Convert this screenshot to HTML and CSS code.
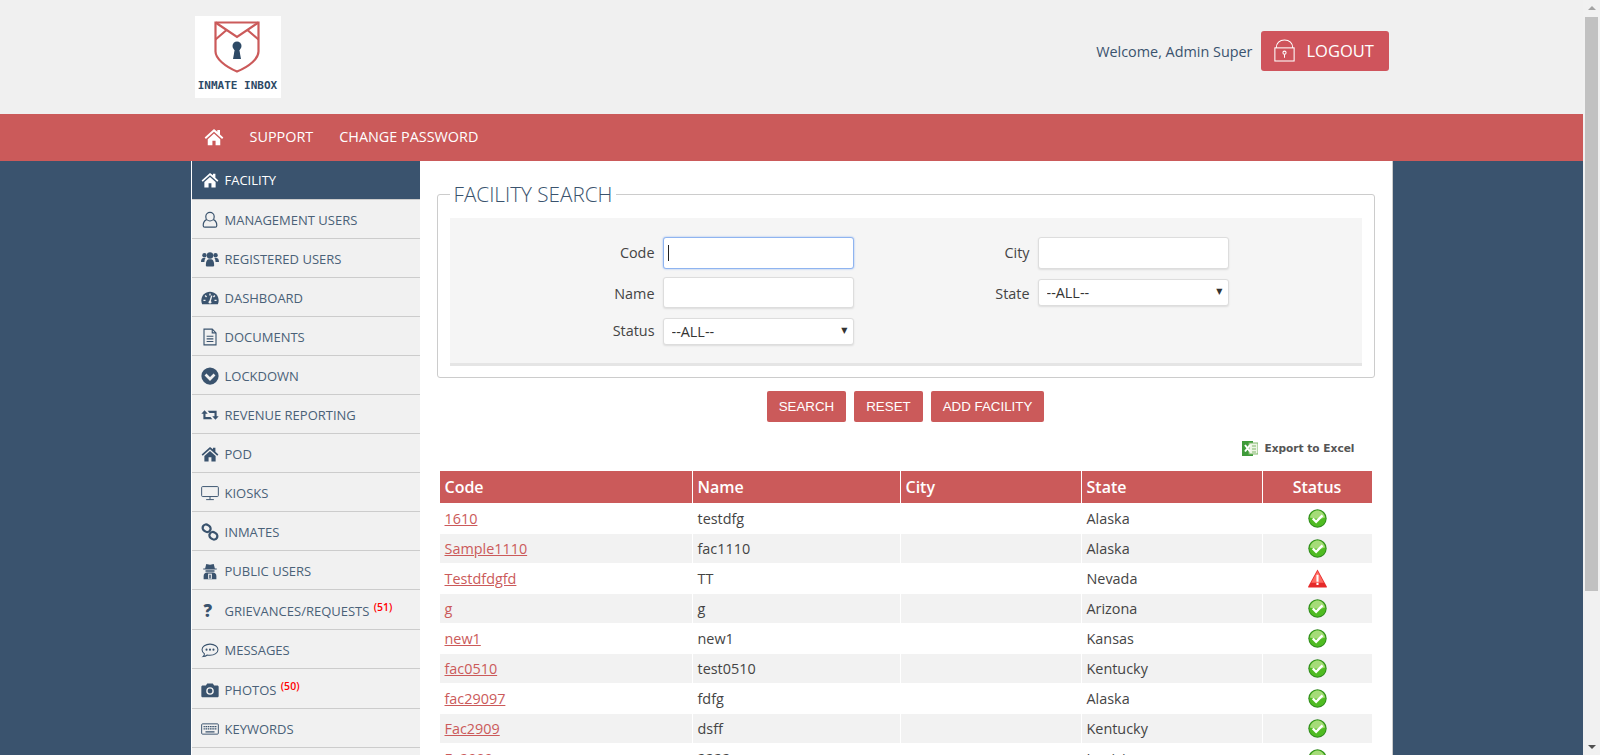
FILE: index.html
```html
<!DOCTYPE html>
<html>
<head>
    <title>Inmate Inbox - Facility</title>
    <link rel="stylesheet" href="styles.css">
</head>
<body>
    <svg class="icon-defs" width="0" height="0">
        <symbol id="i-home" viewBox="0 0 24 24"><path d="M12 2.5 0.8 12.6l1.5 1.7L12 5.6l9.7 8.7 1.5-1.7-4-3.6V3.5h-3.2v2.3zM4.5 14.6V22h5.6v-5.6h3.8V22h5.6v-7.4L12 7.9z"/></symbol>
        <symbol id="i-user" viewBox="0 0 24 24"><g fill="none" stroke="currentColor" stroke-width="1.6"><ellipse cx="12" cy="7.5" rx="5.6" ry="5.8"/><path d="M7.4 11.5C4.5 13 3 15.500 3 18.500v1c0 1.200.8 2 2 2h14c1.200 0 2-.8 2-2v-1c0-3-1.500-5.500-4.400-7"/></g></symbol>
        <symbol id="i-users" viewBox="0 0 26 24"><circle cx="5" cy="6.500" r="3.200"/><circle cx="21" cy="6.500" r="3.200"/><circle cx="13" cy="7" r="4.600"/><path d="M0 16c0-3.500 1.500-5.500 3.500-5.500h3.200C5.500 12 5 14 5 16.500H1c-.6 0-1-.2-1-.5zM26 16c0-3.500-1.500-5.500-3.500-5.500h-3.200c1.200 1.500 1.700 3.500 1.700 6h4c.6 0 1-.2 1-.5zM7 21c0-5 1.500-8.500 4-8.500h4c2.500 0 4 3.500 4 8.500 0 1.500-1 2-2 2H9c-1 0-2-.5-2-2z"/></symbol>
        <symbol id="i-gauge" viewBox="0 0 26 24"><path d="M13 3C6 3 .5 8.500.5 15.500c0 2 .4 3.800 1.200 5.500h22.600c.8-1.700 1.200-3.500 1.200-5.500C25.500 8.500 20 3 13 3z"/><g fill="none" stroke="#f1f1f1" stroke-width="2"><path d="M13 5.500v3M6 8.500l2 2M20 8.500l-2 2M3.500 15.500h3M22.500 15.500h-3"/><path d="M15.500 8.500 13 17"/></g><circle cx="13" cy="18" r="2" fill="#f1f1f1"/></symbol>
        <symbol id="i-doc" viewBox="0 0 20 24"><g fill="none" stroke="currentColor" stroke-width="1.500"><path d="M2 1.500h11l5 5v16H2z"/><path d="M13 1.500v5h5M5.500 11h9M5.500 14.500h9M5.500 18h9"/></g></symbol>
        <symbol id="i-down" viewBox="0 0 24 24"><circle cx="12" cy="12" r="11.500"/><path d="M6 10l6 6 6-6" fill="none" stroke="#f1f1f1" stroke-width="3.600"/></symbol>
        <symbol id="i-retweet" viewBox="0 0 28 24"><path d="M5.500 4.500 0.500 10h3.200v8.500h14l-3-3.300H7V10h3.500z"/><path d="M22.500 19.500l5-5.500h-3.200V5.500h-14l3 3.300H21V14h-3.500z"/></symbol>
        <symbol id="i-tv" viewBox="0 0 28 24"><g fill="none" stroke="currentColor" stroke-width="1.500"><rect x="1" y="2" width="26" height="15.500" rx="1.500"/><path d="M14 17.500v4.500M8 22.300h12"/></g></symbol>
        <symbol id="i-link" viewBox="0 0 24 24"><g fill="none" stroke="currentColor" stroke-width="3"><rect x="2" y="2.500" width="11" height="9" rx="4.500" transform="rotate(35 7.500 7)"/><rect x="11" y="12.500" width="11" height="9" rx="4.500" transform="rotate(35 16.500 17)"/></g></symbol>
        <symbol id="i-secret" viewBox="0 0 20 24"><path d="M5 2.500 10 3.500l5-1 1.500 6h2.500v1.500H1V8.500h2.500z"/><path d="M4 11h12v2h-12z"/><path d="M1.500 23v-4.500C1.500 16 3.500 14 6 14h8c2.500 0 4.500 2 4.500 4.500V23z"/><path d="M7.500 15.500h5v7h-5z" fill="#f1f1f1"/><path d="M9 17h2v5H9z"/></symbol>
        <symbol id="i-comment" viewBox="0 0 26 24"><g fill="none" stroke="currentColor" stroke-width="1.500"><path d="M13 3.500C6.500 3.500 1.500 7 1.500 11.500c0 2.500 1.500 4.500 3.500 6 0 1.500-.8 3-2 4 2.500-.2 4.500-1 6-2.300 1.300.3 2.600.3 4 .3 6.500 0 11.500-3.500 11.500-8S19.500 3.500 13 3.500z"/></g><circle cx="8" cy="11.500" r="1.500"/><circle cx="13" cy="11.500" r="1.500"/><circle cx="18" cy="11.500" r="1.500"/></symbol>
        <symbol id="i-camera" viewBox="0 0 26 24"><path d="M9 2.500h8l2 3h4.500c1.200 0 2 .8 2 2v13c0 1.200-.8 2-2 2h-21c-1.200 0-2-.8-2-2v-13c0-1.200.8-2 2-2H7z"/><circle cx="13" cy="13.500" r="5.500" fill="#f1f1f1"/><circle cx="13" cy="13.500" r="3.500"/></symbol>
        <symbol id="i-keyboard" viewBox="0 0 28 24"><rect x="1" y="4" width="26" height="16" rx="1.500" fill="none" stroke="currentColor" stroke-width="1.500"/><path d="M4 7.500h20v1.800H4zM4 11h20v1.800H4zM7 15.500h14v1.800H7z"/><path d="M6 7h1v7H6zM9.500 7h1v7h-1zM13 7h1v7h-1zM16.500 7h1v7h-1zM20 7h1v7h-1z" fill="#f1f1f1"/></symbol>
        <symbol id="i-ok" viewBox="0 0 18 18"><circle cx="9" cy="9" r="8.700" fill="#2f8a1c"/><circle cx="9" cy="9" r="7.800" fill="#4fbb22"/><path d="M1.800 8C2.800 4 6 1.500 9 1.500S15.200 4 16.200 8c-4 1.500-9.400 1.500-14.400 0z" fill="#a5dc78"/><path d="M4.500 9l3.200 3.200 6-6.200" fill="none" stroke="#fff" stroke-width="2.200"/></symbol>
        <symbol id="i-warn" viewBox="0 0 18 18"><path d="M9 .5 17.800 16.500v1H.2v-1z" fill="#e52a2a"/><path d="M9 2 3 13h12z" fill="#ff6b62"/><path d="M8 5.500h2v6.500H8zM8 13h2v2.200H8z" fill="#fff"/></symbol>
    </svg>

    <div class="top">
        <div class="wrap top-inner">
            <div class="logo">
                <svg class="logo-mark" viewBox="0 0 46 52">
                    <g fill="none" stroke="#cb5a5a" stroke-width="2.200">
                        <path d="M1.500 1.500h43v29c0 7-9 15-21.500 20C11 45.500 1.500 37.500 1.500 30.500z"/>
                        <path d="M1.500 1.500 23 16 44.500 1.500M1.500 18.500 12 9.500M44.500 18.500 34 9.500"/>
                    </g>
                    <circle cx="23" cy="25" r="4.500" fill="#2e4a66"/>
                    <path d="M21 27h4l2 11h-8z" fill="#2e4a66"/>
                </svg>
                <div class="logo-text">INMATE INBOX</div>
            </div>
            <div class="welcome">
                <span>Welcome, Admin Super</span>
                <a class="logout" href="#">
                    <svg class="logout-icon" viewBox="0 0 24 26" fill="none" stroke="#fff" stroke-width="1.200">
                        <rect x="1" y="10" width="22" height="15"/>
                        <path d="M2.500 10C2.500 4.500 6.500 1 12 1s9.500 3.500 9.500 9"/>
                        <circle cx="12" cy="15.500" r="1.800"/>
                        <path d="M12 17.300v4"/>
                    </svg>
                    LOGOUT
                </a>
            </div>
        </div>
    </div>

    <div class="nav">
        <div class="wrap nav-inner">
            <a href="#" class="nav-home"><svg class="nav-home-icon"><use href="#i-home"/></svg></a>
            <a href="#">SUPPORT</a>
            <a href="#">CHANGE PASSWORD</a>
        </div>
    </div>

    <div class="wrap page">
        <ul class="side">
            <li class="active"><svg><use href="#i-home"/></svg>FACILITY</li>
            <li><svg><use href="#i-user"/></svg>MANAGEMENT USERS</li>
            <li><svg><use href="#i-users"/></svg>REGISTERED USERS</li>
            <li><svg><use href="#i-gauge"/></svg>DASHBOARD</li>
            <li><svg><use href="#i-doc"/></svg>DOCUMENTS</li>
            <li><svg><use href="#i-down"/></svg>LOCKDOWN</li>
            <li><svg><use href="#i-retweet"/></svg>REVENUE REPORTING</li>
            <li><svg><use href="#i-home"/></svg>POD</li>
            <li><svg><use href="#i-tv"/></svg>KIOSKS</li>
            <li><svg><use href="#i-link"/></svg>INMATES</li>
            <li><svg><use href="#i-secret"/></svg>PUBLIC USERS</li>
            <li class="tall"><b class="side-q">?</b>GRIEVANCES/REQUESTS <sup>(51)</sup></li>
            <li><svg><use href="#i-comment"/></svg>MESSAGES</li>
            <li class="tall"><svg><use href="#i-camera"/></svg>PHOTOS <sup>(50)</sup></li>
            <li><svg><use href="#i-keyboard"/></svg>KEYWORDS</li>
        </ul>

        <div class="main">
            <fieldset class="search">
                <legend>FACILITY SEARCH</legend>
                <div class="search-panel">
                    <div class="search-col col-left">
                        <div class="field field-tall">
                            <label>Code</label>
                            <div class="focused"><input type="text" class="is-focus"><span class="caret"></span></div>
                        </div>
                        <div class="field field-tall field-name">
                            <label>Name</label>
                            <input type="text">
                        </div>
                        <div class="field field-status">
                            <label>Status</label>
                            <div class="select"><select><option>--ALL--</option></select></div>
                        </div>
                    </div>
                    <div class="search-col col-right">
                        <div class="field field-tall">
                            <label>City</label>
                            <input type="text">
                        </div>
                        <div class="field field-state">
                            <label>State</label>
                            <div class="select"><select><option>--ALL--</option></select></div>
                        </div>
                    </div>
                </div>
            </fieldset>

            <div class="actions">
                <button>SEARCH</button>
                <button>RESET</button>
                <button>ADD FACILITY</button>
            </div>

            <div class="export">
                <svg class="excel" viewBox="0 0 16 16">
                    <rect x="0" y="1" width="11" height="15" fill="#3f9b3a"/>
                    <rect x="7" y="3" width="9" height="11" fill="#eef5e6" stroke="#7fb76a"/>
                    <path d="M3 5l5 6.500M8 5l-5 6.500" stroke="#fff" stroke-width="2"/>
                    <path d="M10 6h4M10 9h4M10 12h4" stroke="#7fb76a"/>
                </svg>
                Export to Excel
            </div>

            <table class="list">
                <thead>
                    <tr>
                        <th class="c-code">Code</th>
                        <th class="c-name">Name</th>
                        <th class="c-city">City</th>
                        <th class="c-state">State</th>
                        <th class="c-status">Status</th>
                    </tr>
                </thead>
                <tbody>
                    <tr><td><a href="#">1610</a></td><td>testdfg</td><td></td><td>Alaska</td><td class="c-status"><svg><use href="#i-ok"/></svg></td></tr>
                    <tr><td><a href="#">Sample1110</a></td><td>fac1110</td><td></td><td>Alaska</td><td class="c-status"><svg><use href="#i-ok"/></svg></td></tr>
                    <tr><td><a href="#">Testdfdgfd</a></td><td>TT</td><td></td><td>Nevada</td><td class="c-status"><svg><use href="#i-warn"/></svg></td></tr>
                    <tr><td><a href="#">g</a></td><td>g</td><td></td><td>Arizona</td><td class="c-status"><svg><use href="#i-ok"/></svg></td></tr>
                    <tr><td><a href="#">new1</a></td><td>new1</td><td></td><td>Kansas</td><td class="c-status"><svg><use href="#i-ok"/></svg></td></tr>
                    <tr><td><a href="#">fac0510</a></td><td>test0510</td><td></td><td>Kentucky</td><td class="c-status"><svg><use href="#i-ok"/></svg></td></tr>
                    <tr><td><a href="#">fac29097</a></td><td>fdfg</td><td></td><td>Alaska</td><td class="c-status"><svg><use href="#i-ok"/></svg></td></tr>
                    <tr><td><a href="#">Fac2909</a></td><td>dsff</td><td></td><td>Kentucky</td><td class="c-status"><svg><use href="#i-ok"/></svg></td></tr>
                    <tr><td><a href="#">Fa2909</a></td><td>2222</td><td></td><td>Louisiana</td><td class="c-status"><svg><use href="#i-ok"/></svg></td></tr>
                </tbody>
            </table>
        </div>
    </div>

    <div class="scrollbar">
        <span class="scroll-up"></span>
        <span class="scroll-thumb"></span>
        <span class="scroll-down"></span>
    </div>
</body>
</html>
```

FILE: styles.css
```css
html, body {
    height: 755px;
    overflow: hidden;
}
body {
    margin: 0;
    width: 1583px;
    background-color: #3a536e;
    font-family: "Open Sans", Arial, sans-serif;
    font-size: 14.4px;
    color: #444;
}
a {
    color: inherit;
}
.icon-defs {
    position: absolute;
}
.wrap {
    width: 1202px;
    margin: 0 auto;
}

/* header */
.top {
    height: 114px;
    background-color: #f0f0f0;
}
.top-inner {
    display: flex;
    justify-content: space-between;
    box-sizing: border-box;
    padding: 16px 4px 0 4px;
}
.logo {
    width: 86px;
    height: 82px;
    background-color: #fff;
    display: flex;
    flex-direction: column;
    align-items: center;
}
.logo-mark {
    width: 46px;
    height: 52px;
    margin: 5px 2px 0 0;
}
.logo-text {
    font-family: "DejaVu Sans Mono", monospace;
    font-weight: bold;
    font-size: 11px;
    color: #2e4a66;
    margin-top: 6px;
}
.welcome {
    display: flex;
    align-items: center;
    gap: 8px;
    height: 40px;
    margin-top: 15px;
    color: #3a536e;
}
.logout {
    display: flex;
    align-items: center;
    box-sizing: border-box;
    width: 128px;
    height: 40px;
    padding: 0 0 1px 13px;
    background-color: #cf545c;
    border-radius: 3px;
    color: #fff;
    font-size: 16.500px;
    text-decoration: none;
}
.logout-icon {
    width: 21px;
    height: 23px;
    margin-right: 12px;
}

/* red menu */
.nav {
    height: 47px;
    background-color: #cb5a5a;
}
.nav-inner {
    display: flex;
    align-items: center;
    height: 47px;
    box-sizing: border-box;
    padding: 0 0 2px 13px;
}
.nav-inner a {
    color: #fff;
    text-decoration: none;
    margin-right: 26px;
}
.nav-inner .nav-home {
    display: flex;
    margin-right: 26px;
}
.nav-home-icon {
    width: 20px;
    height: 20px;
    fill: #fff;
}

/* sidebar + content */
.page {
    display: flex;
    height: 594px;
}
.side {
    width: 229px;
    margin: 0;
    padding: 0;
    list-style: none;
    background-color: #f1f1f1;
    border-left: 1px solid #fff;
    box-sizing: border-box;
    flex-shrink: 0;
}
.side li {
    display: flex;
    align-items: center;
    height: 38px;
    border-bottom: 1px solid #ccc;
    padding-left: 9px;
    font-size: 13px;
    color: #4a6178;
    white-space: pre;
}
.side li:not(.active) {
    height: 36px;
    padding-top: 2px;
}
.side li.tall {
    height: 37px;
}
.side svg {
    width: 18px;
    height: 18px;
    margin-right: 6px;
    fill: #3a536e;
    color: #3a536e;
    flex-shrink: 0;
}
.side li.active {
    background-color: #3a536e;
    color: #fff;
}
.side li.active svg {
    fill: #fff;
}
.side-q {
    width: 15px;
    margin: 0 6px 0 3px;
    font-size: 17px;
    line-height: 18px;
    font-weight: 800;
    color: #3a536e;
}
.side sup {
    align-self: flex-start;
    margin: 8px 0 0 1px;
    font-size: 10.500px;
    line-height: 14px;
    font-weight: 600;
    color: #f00;
}

.main {
    flex: 1;
    background-color: #fff;
    border-right: 1px solid #ccc;
    padding: 20px 17px 0 17px;
    box-sizing: border-box;
    overflow: hidden;
}
.search {
    margin: 0;
    padding: 10px 12px 9px 12px;
    border: 1px solid #ccc;
    border-radius: 3px;
    width: 938px;
    height: 197px;
    box-sizing: border-box;
}
.search legend {
    margin-left: 0;
    padding: 0 4px;
    font-size: 20.700px;
    font-weight: 300;
    line-height: 27px;
    color: #3a536e;
}
.search-panel {
    display: flex;
    height: 148px;
    padding-top: 19px;
    box-sizing: border-box;
    background-color: #f5f5f5;
    border-bottom: 3px solid #e5e5e5;
}
.search-col {
    display: flex;
    flex-direction: column;
}
.col-left {
    width: 404px;
    gap: 8px;
}
.col-right {
    width: 375px;
    gap: 10px;
}
.field {
    display: flex;
    align-items: center;
    justify-content: flex-end;
    gap: 8px;
}
.field label {
    color: #444;
    margin-top: -2px;
}
.field-name label, .field-state label {
    margin-top: 1px;
}
.field-status {
    margin-top: 2px;
}
input, select {
    box-sizing: border-box;
    width: 191px;
    height: 27px;
    padding: 0 8px;
    background-color: #fff;
    border: 1px solid #ddd;
    border-radius: 3px;
    box-shadow: 0 1px 2px rgba(0,0,0,0.1);
    font-family: "Open Sans", Arial, sans-serif;
    font-size: 14.4px;
    color: #333;
    outline: none;
}
.field-tall input {
    height: 32px;
}
.field-name input {
    height: 31px;
}
.field-tall .is-focus {
    border: 1px solid #8fb4f0;
    box-shadow: 0 0 2px #8fb4f0;
}
.focused {
    position: relative;
    display: flex;
}
.caret {
    position: absolute;
    left: 5px;
    top: 8px;
    width: 1px;
    height: 16px;
    background-color: #222;
}
select {
    appearance: none;
    display: block;
}
.select {
    position: relative;
}
.select::after {
    content: "\25BC";
    position: absolute;
    right: 6px;
    top: 8px;
    font-family: "DejaVu Sans", sans-serif;
    font-size: 8px;
    color: #333;
}

.actions {
    display: flex;
    justify-content: center;
    gap: 8px;
    margin-top: 13px;
    width: 938px;
}
button {
    height: 31px;
    padding: 0 12px;
    background-color: #cb5a5a;
    border: none;
    border-radius: 2px;
    color: #fff;
    font-family: "Liberation Sans", Arial, sans-serif;
    font-size: 13.333px;
}

.export {
    display: flex;
    justify-content: flex-end;
    align-items: center;
    gap: 6px;
    height: 16px;
    margin-top: 18px;
    padding-right: 20px;
    width: 918px;
    font-family: "DejaVu Sans", Verdana, sans-serif;
    font-size: 10.600px;
    font-weight: bold;
    color: #555;
}
.excel {
    width: 16px;
    height: 16px;
}

.list {
    table-layout: fixed;
    width: 934px;
    margin: 14px 0 0 2px;
    border-collapse: separate;
    border-spacing: 1px;
}
.list th {
    height: 32px;
    padding: 0 5px;
    background-color: #cb5a5a;
    color: #fff;
    font-size: 16px;
    font-weight: 600;
    text-align: left;
}
.list td {
    height: 29px;
    padding: 0 5px;
}
.list tbody tr:nth-child(even) td {
    background-color: #f2f2f2;
}
.list td a {
    color: #cb5a5a;
}
.list .c-code {
    width: 242px;
}
.list .c-name {
    width: 197px;
}
.list .c-city {
    width: 170px;
}
.list .c-state {
    width: 170px;
}
.list .c-status {
    text-align: center;
}
.list td svg {
    display: block;
    width: 19px;
    height: 19px;
    margin: 0 auto;
}

/* fake scrollbar, the page itself is cut at the window height */
.scrollbar {
    position: fixed;
    top: 0;
    right: 0;
    width: 17px;
    height: 755px;
    background-color: #f1f1f1;
}
.scroll-thumb {
    position: absolute;
    top: 17px;
    left: 2px;
    width: 13px;
    height: 574px;
    background-color: #c1c1c1;
}
.scroll-up, .scroll-down {
    position: absolute;
    left: 5px;
    width: 0;
    height: 0;
    border-left: 4px solid transparent;
    border-right: 4px solid transparent;
}
.scroll-up {
    top: 6px;
    border-bottom: 4px solid #a3a3a3;
}
.scroll-down {
    bottom: 6px;
    border-top: 4px solid #505050;
}
```
